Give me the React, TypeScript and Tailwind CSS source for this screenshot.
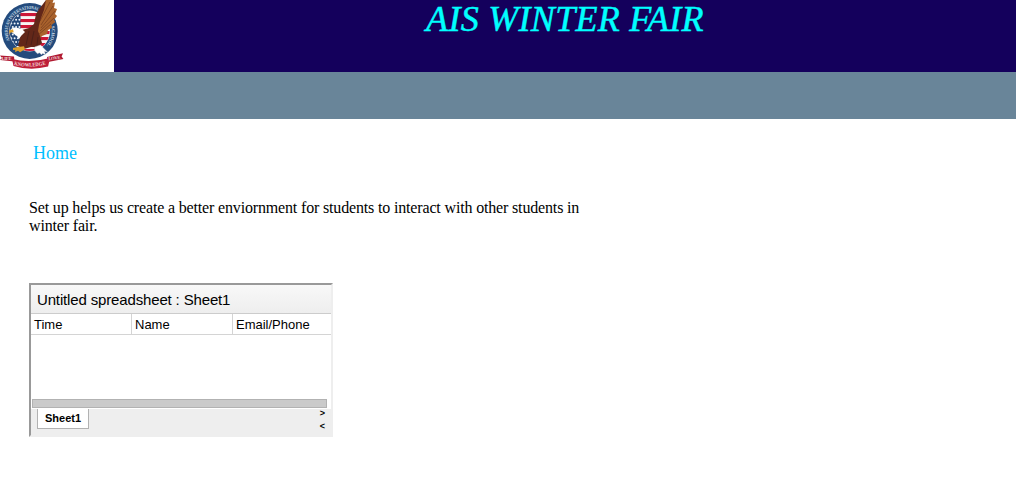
function Logo() {
  const stars: [number, number][] = [];
  for (let r = 0; r < 8; r++) {
    for (let c = 0; c < 3; c++) {
      stars.push([11.3 + c * 3.3 + (r % 2) * 1.5, 16 + r * 3.7]);
    }
  }
  return (
    <svg width="66" height="72" viewBox="0 0 66 72" aria-label="American International School">
      <defs>
        <clipPath id="inner"><circle cx="29.7" cy="31" r="20" /></clipPath>
        <path id="ringTop" d="M9.8 40.3A22 22 0 0 1 40.6 11.9" />
        <path id="ringRight" d="M51.2 26.4A22 22 0 0 1 45.7 46.1" />
        <path id="banner" d="M14 65Q30 68.5 47 64.3" />
      </defs>
      <circle cx="29.7" cy="31" r="28" fill="#244b7d" />
      <circle cx="29.7" cy="31" r="20.4" fill="#dfe6ee" />
      <g clipPath="url(#inner)">
        <rect x="9" y="10" width="42" height="42" fill="#f8f4f4" />
        {[13, 19, 25, 31, 37, 43, 49].map((y) => (
          <rect key={y} x="20" y={y} width="31" height="3.1" fill="#cc1738" />
        ))}
        <path d="M9 10h11.5v36H9z" fill="#224779" />
        {stars.map(([x, y]) => (
          <circle key={`${x}-${y}`} cx={x} cy={y} r="1" fill="#eef4fb" />
        ))}
      </g>
      <g fill="#d5e0ed" fontFamily="Liberation Serif, serif" fontWeight="700">
        <text fontSize="4.6"><textPath href="#ringTop" textLength="53" lengthAdjust="spacingAndGlyphs">AMERICAN INTERNATIONAL</textPath></text>
        <text fontSize="4.6"><textPath href="#ringRight" textLength="20" lengthAdjust="spacingAndGlyphs">SCHOOL</textPath></text>
      </g>
      <path d="M35 25L38 14L46 0H53.5L52.5 3L55 2.5L54 8L57 9L55 14L57 16L54 20L55.5 22L51.5 25L52 28L48 30L47 34L42 36L39 40L30 34z" fill="#a9622c" />
      <path d="M50 2L40 21M53 6L41 25M55 11L41 28M54 18L40 31M51 24L38 35" stroke="#743b1c" strokeWidth=".7" fill="none" />
      <path d="M34 24L36 14L40 8L46 0L44 10L41 18L39 25L38 31L40 36L42 43L38 47L31 47L24 49L18 46L20 38L22 30L29 28z" fill="#622719" />
      <path d="M29 31l-3 14M34 31l-3 14M38 37l-1 8" stroke="#451e18" strokeWidth=".8" />
      <path d="M10 31Q11 27 16 27.5L22 29L25 32L21 36L19 39L17 36L14 34z" fill="#fff" />
      <path d="M9 30.6l4-1.3.7 3-3.2.1-.7 2z" fill="#dda02d" />
      <path d="M13 48l5-1 6-.7 1 3-5 3-2-1.6-3 1.2.4-2.2-2.4.2z" fill="#dda02d" />
      <path d="M34.5 47l6-2 7 7-3-.5 1 3-3-1-1 1.3-2-2-2 1-2-2-1-2z" fill="#fff" stroke="#bdc3cb" strokeWidth=".4" />
      <path d="M0 55.5l14 1 .5 5L0 60l2-2zM47 57l16-3.8-1.4 3.2 1.8 2.5L48 62z" fill="#b01a32" />
      <path d="M12 59Q30 63.6 50 58l-1.9 8.6Q30 71 13.5 65.9z" fill="#bd1f39" />
      <g fill="#f2d9da" fontFamily="Liberation Serif, serif" fontWeight="700">
        <text x="1.5" y="59.8" fontSize="4.6" textLength="10">LIFE</text>
        <text x="48.5" y="60.3" fontSize="4.6" textLength="12" transform="rotate(-6 48 60)">LOVE</text>
        <text fontSize="5.4"><textPath href="#banner" textLength="32" lengthAdjust="spacingAndGlyphs">KNOWLEDGE</textPath></text>
      </g>
    </svg>
  );
}

function Spreadsheet() {
  return (
    <section className="mt-12 flex h-[154px] w-[304px] flex-col border-2 border-t-[#999] border-r-[#eee] border-b-[#eee] border-l-[#999] bg-white font-['Liberation_Sans',sans-serif] text-black">
      <div className="h-[29px] shrink-0 border-b border-[#ccc] bg-linear-to-b from-[#f8f8f8] to-[#eee] pl-1.5 text-[15px] leading-[29px] tracking-[-0.15px]">
        Untitled spreadsheet : Sheet1
      </div>
      <div className="grid h-[21px] shrink-0 grid-cols-[101px_101px_1fr] border-b border-[#d4d4d4] text-[13px] leading-[22px]">
        <div className="h-5 border-r border-[#d4d4d4] pl-[3px]">Time</div>
        <div className="h-5 border-r border-[#d4d4d4] pl-[3px]">Name</div>
        <div className="h-5 pl-[3px]">Email/Phone</div>
      </div>
      <div className="flex-1" />
      <div className="mb-px ml-px h-[9px] w-[295px] shrink-0 border border-[#b2b2b2] bg-[#cacaca]" />
      <div className="flex h-[26px] shrink-0 justify-between bg-[#eee] pr-1.5 pl-1.5">
        <div className="h-5 w-[52px] border border-t-0 border-[#b2b2b2] bg-white text-center text-[11px] leading-[18px] font-bold">Sheet1</div>
        <div className="-mt-0.5 flex flex-col text-[9px] leading-[13px] font-bold">
          <span>&gt;</span>
          <span>&lt;</span>
        </div>
      </div>
    </section>
  );
}

export default function App() {
  return (
    <div className="min-h-[486px] w-full bg-white font-['Liberation_Serif',serif] text-black">
      <header className="flex h-[72px] bg-[#14005c]">
        <div className="h-full w-[114px] shrink-0 bg-white"><Logo /></div>
        <h1 className="flex-1 text-center text-[36px] leading-[39px] tracking-[0.3px] text-[#00ffff] italic [-webkit-text-stroke:0.5px_#00ffff]">AIS WINTER FAIR</h1>
      </header>
      <div className="h-[47px] bg-[#698599]" />
      <main className="pl-[29px]">
        <nav className="pt-6 pl-1 text-[18px] leading-5 text-[#00bfff]">Home</nav>
        <p className="mt-9 w-[570px] text-base leading-[18px] tracking-[-0.16px]">
          Set up helps us create a better enviornment for students to interact with other students in<br />
          winter fair.
        </p>
        <Spreadsheet />
      </main>
    </div>
  );
}
